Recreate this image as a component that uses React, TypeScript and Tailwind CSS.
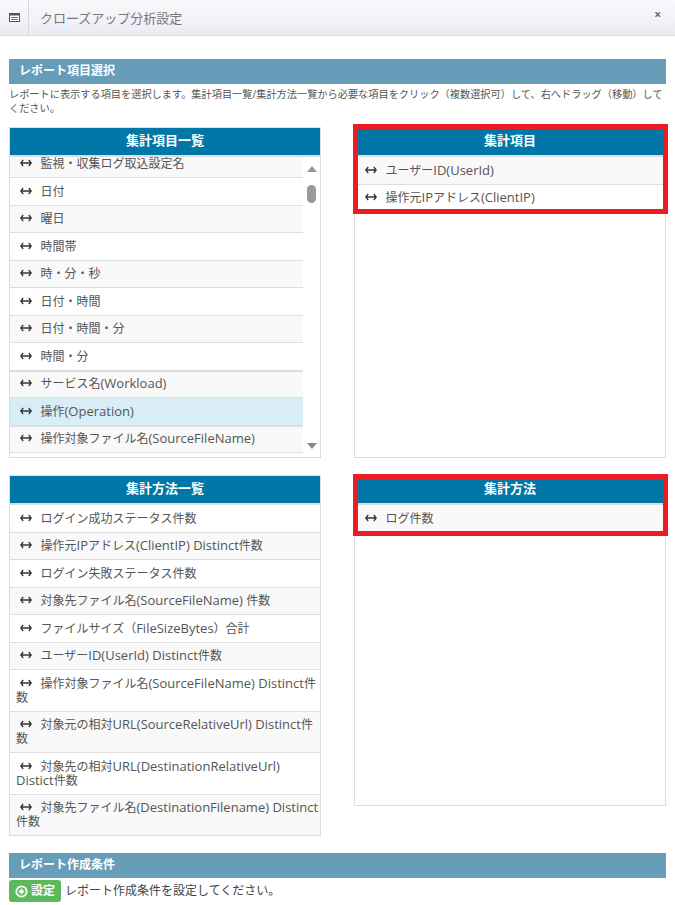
import type { ReactNode } from "react";

const font = {
  fontFamily: '"Open Sans", "Noto Sans CJK JP", sans-serif',
};

const availableFields = [
  "日付",
  "曜日",
  "時間帯",
  "時・分・秒",
  "日付・時間",
  "日付・時間・分",
  "時間・分",
];

const methods = [
  "ログイン成功ステータス件数",
  "操作元IPアドレス(ClientIP) Distinct件数",
  "ログイン失敗ステータス件数",
  "対象先ファイル名(SourceFileName) 件数",
  "ファイルサイズ（FileSizeBytes）合計",
  "ユーザーID(UserId) Distinct件数",
  "操作対象ファイル名(SourceFileName) Distinct件数",
  "対象元の相対URL(SourceRelativeUrl) Distinct件数",
  "対象先の相対URL(DestinationRelativeUrl) Distict件数",
  "対象先ファイル名(DestinationFilename) Distinct件数",
];

// the Latin runs sit at 13px, the Japanese ones at 12px
function Label({ text }: { text: string }) {
  const parts = text.split(/([\x00-\x7f]+)/).filter(Boolean);
  return (
    <>
      {parts.map((part, i) =>
        /^[\x00-\x7f]+$/.test(part) ? (
          <span key={i}>{part}</span>
        ) : (
          <span key={i} className="text-[12px] leading-[12px]">
            {part}
          </span>
        ),
      )}
    </>
  );
}

function Arrow() {
  return (
    <svg
      width="12"
      height="8"
      viewBox="0 0 12 8"
      className="mr-[8.5px] ml-[4px] inline-block align-[1px] text-[#333333]"
    >
      <path
        d="M3.2 1 L0.8 4 L3.2 7 M8.8 1 L11.2 4 L8.8 7 M1 4 H11"
        fill="none"
        stroke="currentColor"
        strokeWidth="1.3"
      />
    </svg>
  );
}

function Row({ text, className = "" }: { text: string; className?: string }) {
  return (
    <div
      className={`border-b border-[#dddddd] pt-[5.75px] pb-[6.75px] pl-[6px] text-[13px] leading-[14px] text-[#555555] ${className}`}
    >
      <Arrow />
      <Label text={text} />
    </div>
  );
}

function Header({ title }: { title: string }) {
  return (
    <div className="h-[29px] border-b-[2px] border-[#dddddd] bg-[#0077a6] text-center text-[13px] font-bold leading-[24px] text-white">
      {title}
    </div>
  );
}

function SectionBar({ title }: { title: string }) {
  return (
    <div className="h-[25px] bg-[#689db9] pl-[10px] text-[12px] font-bold leading-[24px] text-white">
      {title}
    </div>
  );
}

function Highlight({ className }: { className: string }) {
  return (
    <div
      className={`pointer-events-none absolute left-[-2px] w-[315px] border-[5px] border-[#ed1c24] ${className}`}
    />
  );
}

function Scrollbar() {
  return (
    <div className="absolute top-[30px] right-0 bottom-0 flex w-[17px] flex-col items-center bg-white">
      <div className="mt-[8px] h-0 w-0 border-x-[5px] border-b-[6px] border-x-transparent border-b-[#999999]" />
      <div className="mt-[13px] h-[18px] w-[9px] rounded-full bg-[#999999]" />
      <div className="mt-auto mb-[8px] h-0 w-0 border-x-[5px] border-t-[6px] border-x-transparent border-t-[#888888]" />
    </div>
  );
}

function Frame({ children }: { children: ReactNode }) {
  return <div className="relative h-[331px] border border-[#dddddd]">{children}</div>;
}

export default function App() {
  return (
    <div className="h-[905px] w-[675px] overflow-hidden bg-white" style={font}>
      <div className="flex h-[36px] items-stretch border-b border-[#dcdce0] bg-gradient-to-b from-[#fafafc] to-[#ecebf4]">
        <div className="flex w-[29px] items-center justify-center border-r border-[#d8d8dc]">
          <svg width="11" height="9" viewBox="0 0 11 9">
            <rect x="0.5" y="0.5" width="10" height="8" fill="#ffffff" stroke="#555555" />
            <rect x="0" y="0" width="11" height="2.5" fill="#555555" />
            <rect x="2" y="4" width="7" height="1" fill="#777777" />
            <rect x="2" y="6" width="7" height="1" fill="#777777" />
          </svg>
        </div>
        <div className="flex-1 pl-[11px] text-[13px] leading-[36px] text-[#777777]">
          クローズアップ分析設定
        </div>
        <div className="pr-[14px] text-[12px] font-bold leading-[30px] text-[#666666]">
          ×
        </div>
      </div>

      <div className="px-[9px] pt-[23px]">
        <SectionBar title="レポート項目選択" />
        <p className="mt-[3px] text-[10.2px] leading-[14px] text-[#555555]">
          レポートに表示する項目を選択します。集計項目一覧/集計方法一覧から必要な項目をクリック（複数選択可）して、右へドラッグ（移動）してください。
        </p>

        <div className="mt-[12px] grid grid-cols-[312px_312px] gap-x-[33px]">
          <div className="relative h-[331px] overflow-hidden border border-[#dddddd]">
            <Header title="集計項目一覧" />
            <div className="w-[294px] border-r border-[#dddddd]">
              <div className="flex h-[21px] items-end overflow-hidden border-b border-[#dddddd] bg-[#f9f9f9] pb-[7px] pl-[6px] text-[13px] leading-[14px] text-[#555555]">
                <div>
                  <Arrow />
                  <Label text="監視・収集ログ取込設定名" />
                </div>
              </div>
              {availableFields.map((name, i) => (
                <Row
                  key={name}
                  text={name}
                  className={i % 2 === 1 ? "bg-[#f9f9f9]" : "bg-white"}
                />
              ))}
              <Row
                text="サービス名(Workload)"
                className="h-[27.5px] border-t !pt-[4.75px] bg-[#f9f9f9]"
              />
              <Row text="操作(Operation)" className="bg-[#d9edf7]" />
              <Row
                text="操作対象ファイル名(SourceFileName)"
                className="h-[27.5px] border-t !pt-[4.75px] bg-[#f9f9f9]"
              />
              <div className="h-[40px]" />
            </div>
            <Scrollbar />
          </div>

          <Frame>
            <Header title="集計項目" />
            <Row text="ユーザーID(UserId)" className="bg-[#f9f9f9]" />
            <Row text="操作元IPアドレス(ClientIP)" className="bg-white" />
            <Highlight className="top-[-4px] h-[90px]" />
          </Frame>
        </div>

        <div className="mt-[17px] grid grid-cols-[312px_312px] gap-x-[33px]">
          <div className="border border-[#dddddd]">
            <Header title="集計方法一覧" />
            {methods.map((name, i) => (
              <Row
                key={name}
                text={name}
                className={`${i % 2 === 1 ? "bg-[#f9f9f9]" : "bg-white"} last:border-b-0`}
              />
            ))}
          </div>

          <Frame>
            <Header title="集計方法" />
            <Row text="ログ件数" className="bg-[#f9f9f9]" />
            <Highlight className="top-[-2px] h-[62px]" />
          </Frame>
        </div>

        <div className="mt-[17px]">
          <SectionBar title="レポート作成条件" />
        </div>
        <div className="mt-[2px] flex items-center gap-[4px]">
          <button className="flex h-[22px] w-[52px] items-center justify-center gap-[3px] rounded-[3px] bg-[#5cb85c] text-[12px] font-bold text-white">
            <svg width="13" height="13" viewBox="0 0 13 13">
              <circle cx="6.5" cy="6.5" r="5.2" fill="none" stroke="#ffffff" strokeWidth="1.8" />
              <path d="M6.5 3.8 V9.2 M3.8 6.5 H9.2" stroke="#ffffff" strokeWidth="1.8" />
            </svg>
            設定
          </button>
          <span className="text-[12px] text-[#444444]">
            レポート作成条件を設定してください。
          </span>
        </div>
      </div>
    </div>
  );
}
